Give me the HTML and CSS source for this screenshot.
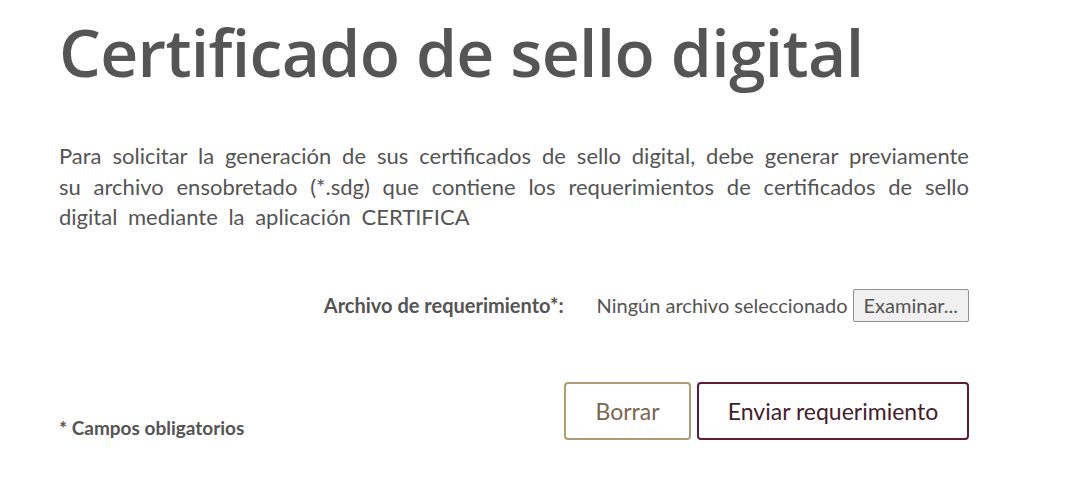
FILE: index.html
```html
<!DOCTYPE html>
<html lang="es">
<head>
<meta charset="utf-8">
<title>Certificado de sello digital</title>
<link rel="stylesheet" href="styles.css">
</head>
<body>
<main class="page">
  <h1 class="title">Certificado de sello digital</h1>
  <p class="intro">Para solicitar la generación de sus certificados de sello digital, debe generar previamente su archivo ensobretado (*.sdg) que contiene los requerimientos de certificados de sello digital mediante la aplicación CERTIFICA</p>
  <form class="form">
    <div class="field">
      <label class="field-label">Archivo de requerimiento*:</label>
      <div class="file">
        <span class="file-name">Ningún archivo seleccionado</span>
        <span class="file-btn">Examinar...</span>
      </div>
    </div>
    <div class="footer">
      <span class="required">* Campos obligatorios</span>
      <div class="actions">
        <button type="button" class="btn btn-secondary">Borrar</button>
        <button type="button" class="btn btn-primary">Enviar requerimiento</button>
      </div>
    </div>
  </form>
</main>
</body>
</html>
```
FILE: styles.css
```css
* { box-sizing: border-box; }
html, body { margin: 0; padding: 0; background: #ffffff; }
body { font-family: Lato, "Open Sans", sans-serif; color: #545454; }
.page { width: 910px; margin-left: 59px; padding-top: 11px; }
.title {
  margin: 0;
  font-family: "Open Sans", sans-serif;
  font-weight: 600;
  font-size: 66px;
  line-height: 80px;
  color: #555555;
  letter-spacing: -0.65px;
}
.intro {
  margin: 50px 0 0 0;
  font-size: 22px;
  line-height: 30.5px;
  word-spacing: 5px;
  text-align: justify;
}
.form { margin-top: 56px; }
.field { display: flex; align-items: center; justify-content: flex-end; }
.field-label { font-weight: 700; font-size: 20px; margin-right: 33px; }
.file { display: flex; align-items: center; gap: 5px; }
.file-name { font-size: 20px; }
.file-btn {
  font-size: 20px;
  height: 33px;
  line-height: 31px;
  padding: 0 10px;
  border: 1px solid #8f8f8f;
  border-radius: 2px;
  background: #f0f0f0;
}
.footer { display: flex; justify-content: space-between; align-items: flex-end; margin-top: 60px; }
.required { font-weight: 700; font-size: 19px; margin-bottom: 1px; }
.actions { display: flex; gap: 6px; }
.btn {
  height: 58px;
  font-family: Lato, sans-serif;
  font-size: 23px;
  background: #ffffff;
  border-radius: 4px;
  border: 2px solid;
  cursor: pointer;
}
.btn-secondary { width: 127px; border-color: #b09a78; color: #7b6650; }
.btn-primary { width: 272px; border-color: #5e1b35; color: #461c2d; }
```
